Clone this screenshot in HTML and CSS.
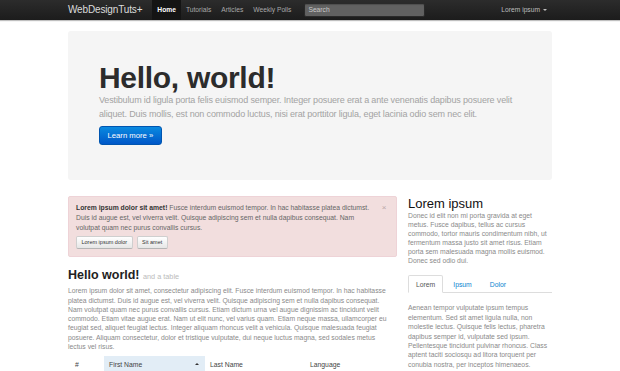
FILE: index.html
```html
<!DOCTYPE html>
<html>
<head>
<meta charset="utf-8">
<link rel="stylesheet" href="styles.css">
</head>
<body>
<div class="navbar">
  <div class="container nav-inner">
    <a class="brand">WebDesignTuts+</a>
    <ul class="nav">
      <li class="active"><a>Home</a></li>
      <li><a>Tutorials</a></li>
      <li><a>Articles</a></li>
      <li><a>Weekly Polls</a></li>
    </ul>
    <div class="search"><span>Search</span></div>
    <div class="nav-right"><a>Lorem ipsum</a><span class="caret"></span></div>
  </div>
</div>

<div class="container">
  <div class="hero">
    <h1>Hello, world!</h1>
    <p>Vestibulum id ligula porta felis euismod semper. Integer posuere erat a ante venenatis dapibus posuere velit aliquet. Duis mollis, est non commodo luctus, nisi erat porttitor ligula, eget lacinia odio sem nec elit.</p>
    <p><a class="btn-primary">Learn more »</a></p>
  </div>

  <div class="row">
    <div class="main">
      <div class="alert">
        <div class="alert-body">
          <p><strong>Lorem ipsum dolor sit amet!</strong> Fusce interdum euismod tempor. In hac habitasse platea dictumst. Duis id augue est, vel viverra velit. Quisque adipiscing sem et nulla dapibus consequat. Nam volutpat quam nec purus convallis cursus.</p>
          <div class="btns"><a class="btn">Lorem ipsum dolor</a><a class="btn">Sit amet</a></div>
        </div>
        <span class="close">×</span>
      </div>

      <h2 class="title">Hello world! <small>and a table</small></h2>
      <p class="text">Lorem ipsum dolor sit amet, consectetur adipiscing elit. Fusce interdum euismod tempor. In hac habitasse<br>
      platea dictumst. Duis id augue est, vel viverra velit. Quisque adipiscing sem et nulla dapibus consequat.<br>
      Nam volutpat quam nec purus convallis cursus. Etiam dictum urna vel augue dignissim ac tincidunt velit<br>
      commodo. Etiam vitae augue erat. Nam ut elit nunc, vel varius quam. Etiam neque massa, ullamcorper eu<br>
      feugiat sed, aliquet feugiat lectus. Integer aliquam rhoncus velit a vehicula. Quisque malesuada feugiat<br>
      posuere. Aliquam consectetur, dolor et tristique vulputate, dui neque luctus magna, sed sodales metus<br>
      lectus vel risus.</p>

      <table class="table">
        <thead>
          <tr>
            <th class="c-num">#</th>
            <th class="c-first sorted"><span>First Name</span><span class="up"></span></th>
            <th class="c-last">Last Name</th>
            <th class="c-lang">Language</th>
          </tr>
        </thead>
        <tbody>
          <tr><td>1</td><td>Mark</td><td>Otto</td><td>CSS</td></tr>
        </tbody>
      </table>
    </div>

    <div class="side">
      <h2 class="side-title">Lorem ipsum</h2>
      <p class="text side-text">Donec id elit non mi porta gravida at eget metus. Fusce dapibus, tellus ac cursus commodo, tortor mauris condimentum nibh, ut fermentum massa justo sit amet risus. Etiam porta sem malesuada magna mollis euismod. Donec sed odio dui.</p>
      <ul class="tabs">
        <li class="active"><a>Lorem</a></li>
        <li><a>Ipsum</a></li>
        <li><a>Dolor</a></li>
      </ul>
      <p class="text tab-text">Aenean tempor vulputate ipsum tempus elementum. Sed sit amet ligula nulla, non molestie lectus. Quisque felis lectus, pharetra dapibus semper id, vulputate sed ipsum. Pellentesque tincidunt pulvinar rhoncus. Class aptent taciti sociosqu ad litora torquent per conubia nostra, per inceptos himenaeos.</p>
    </div>
  </div>
</div>
</body>
</html>
```

FILE: styles.css
```css
* { box-sizing: border-box; }
html, body { margin: 0; padding: 0; background: #fff; }
body {
  font-family: "Liberation Sans", Arial, Helvetica, sans-serif;
  font-size: 6.8px;
  line-height: 9.3px;
  color: #333;
  overflow: hidden;
}
p { margin: 0 0 4.6px; }
a { text-decoration: none; }
ul { list-style: none; margin: 0; padding: 0; }

.container { width: 484px; margin: 0 auto; }

/* navbar */
.navbar {
  height: 20px;
  background: linear-gradient(#2c2c2c, #1c1c1c);
  box-shadow: 0 1px 1px rgba(0,0,0,0.25);
  margin-bottom: 11px;
}
.nav-inner { display: flex; align-items: center; height: 20px; }
.brand {
  color: #dcdcdc;
  font-size: 10px;
  letter-spacing: -0.15px;
  padding-right: 10px;
  line-height: 20px;
}
.nav { display: flex; height: 20px; }
.nav li a {
  display: block;
  padding: 0 5px;
  line-height: 20px;
  color: #a9a9a9;
  font-size: 6.7px;
}
.nav li.active a { background: #141414; color: #fff; font-weight: bold; }
.search {
  margin-left: 8px;
  width: 121px;
  height: 14px;
  border: 1px solid #2a2a2a;
  border-radius: 2px;
  background: #616161;
  box-shadow: inset 0 1px 1px rgba(0,0,0,0.2);
  display: flex;
  align-items: center;
  padding-left: 3px;
}
.search span { color: #c9c9c9; font-size: 6.7px; }
.nav-right { margin-left: auto; margin-right: 5px; display: flex; align-items: center; color: #bdbdbd; }
.nav-right a { color: #bdbdbd; font-size: 6.7px; }
.caret {
  margin-left: 3px;
  width: 0; height: 0;
  border-left: 2px solid transparent;
  border-right: 2px solid transparent;
  border-top: 2px solid #bdbdbd;
}

/* hero */
.hero {
  background: #f5f5f5;
  border-radius: 3px;
  padding: 31px;
  margin-bottom: 15.5px;
  height: 149px;
}
.hero h1 {
  margin: 0;
  font-size: 30px;
  line-height: 31px;
  letter-spacing: -0.3px;
  font-weight: bold;
  color: #2c2c2c;
}
.hero p {
  font-size: 9px;
  letter-spacing: -0.15px;
  line-height: 14px;
  color: #a3a3a3;
}
.btn-primary {
  display: inline-block;
  height: 19px;
  line-height: 17px;
  padding: 0 7.5px;
  font-size: 7.7px;
  letter-spacing: 0;
  color: #fff;
  border: 1px solid #0055b0;
  border-radius: 3px;
  background: linear-gradient(#0a8ae0, #0057c8);
}

/* row */
.row { display: grid; grid-template-columns: 329px 144px; column-gap: 11px; }
.text { color: #8a8a8a; }

.alert {
  display: grid;
  grid-template-columns: 1fr 12px;
  background: #f2dede;
  border: 1px solid #eed3d7;
  border-radius: 2px;
  padding: 6px 6px 7px 7px;
  margin-bottom: 9.3px;
  color: #666;
}
.alert p { margin: 0 0 3px; line-height: 10px; }
.alert strong { color: #333; }
.close { color: #b9a7a7; font-size: 8px; line-height: 10px; text-align: center; }
.btns { display: flex; gap: 4px; }
.btn {
  display: block;
  height: 13px;
  line-height: 11px;
  padding: 0 4.5px;
  font-size: 5.5px;
  color: #333;
  border: 1px solid #cfcfcf;
  border-bottom-color: #b5b5b5;
  border-radius: 2px;
  background: linear-gradient(#fff, #e6e6e6);
}

.title {
  margin: 0;
  font-size: 12.5px;
  line-height: 18.5px;
  font-weight: bold;
  color: #222;
}
.title small { font-size: 7.3px; font-weight: normal; color: #bbb; }

.table { width: 329px; border-collapse: collapse; }
.table th {
  text-align: left;
  font-weight: normal;
  color: #444;
  padding: 4px 5px;
  line-height: 9.3px;
  height: 17.5px;
}
.table td { padding: 4px 5px; border-top: 1px solid #ddd; }
.c-num { width: 36px; padding-left: 7px !important; }
.c-first { width: 101px; }
.c-last { width: 100px; }
.sorted { background: #e2edf6; }
.up {
  float: right;
  margin-top: 3.5px;
  margin-right: 1px;
  width: 0; height: 0;
  border-left: 2px solid transparent;
  border-right: 2px solid transparent;
  border-bottom: 2.5px solid #333;
}

/* side */
.side-title {
  margin: 0;
  font-size: 13px;
  line-height: 15px;
  font-weight: normal;
  color: #111;
}
.side-text { line-height: 9.1px; padding-right: 2px; }
.tabs {
  display: flex;
  margin-top: 10px;
  border-bottom: 1px solid #ddd;
  margin-bottom: 10px;
}
.tabs li { margin-right: 2px; margin-bottom: -1px; }
.tabs a {
  display: block;
  padding: 3.5px 7px;
  line-height: 9.3px;
  border: 1px solid transparent;
  border-radius: 2px 2px 0 0;
  color: #0a84d0;
}
.tabs li.active a {
  color: #555;
  background: #fff;
  border-color: #ddd #ddd transparent;
}
.tab-text { line-height: 9.4px; }
```
